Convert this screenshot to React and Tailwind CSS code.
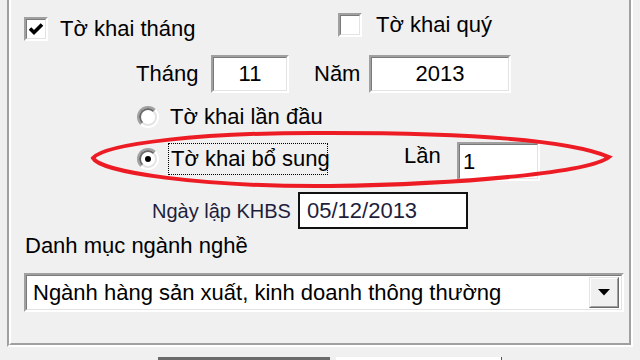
import React from 'react';

// sunken 3D field, classic Windows look
function Sunken({ className = '', children }) {
  return (
    <div className={`border-2 border-t-[#a0a0a0] border-l-[#a0a0a0] border-r-white border-b-white ${className}`}>
      <div className="w-full h-full border border-t-[#7a7a7a] border-l-[#7a7a7a] border-r-[#e3e3e3] border-b-[#e3e3e3] bg-white flex items-center">
        {children}
      </div>
    </div>
  );
}

function Checkbox({ checked }) {
  return (
    <Sunken className="w-[24px] h-[24px]">
      {checked && (
        <svg width="18" height="18" viewBox="0 0 18 18" className="mx-auto">
          <path d="M3 8.5 L7 12.5 L15 4.5" fill="none" stroke="#000" strokeWidth="3.6" />
        </svg>
      )}
    </Sunken>
  );
}

function Radio({ checked }) {
  return (
    <div className="w-[22px] h-[22px] rounded-full border-2 border-t-[#a0a0a0] border-l-[#a0a0a0] border-r-white border-b-white">
      <div className="w-full h-full rounded-full border-2 border-t-[#696969] border-l-[#696969] border-r-[#e3e3e3] border-b-[#e3e3e3] bg-white flex items-center justify-center">
        {checked && <div className="w-[6px] h-[6px] rounded-full bg-black" />}
      </div>
    </div>
  );
}

export default function App() {
  return (
    <div className="relative w-[640px] h-[360px] overflow-hidden whitespace-nowrap bg-[#f0f0f0] text-black text-[22px] leading-none font-['Liberation_Sans',Arial,sans-serif]">
      {/* group box (top edge is off screen) */}
      <div className="ml-[7px] w-[626px] border-l-2 border-r-2 border-b-2 border-l-[#a0a0a0] border-r-white border-b-white">
        <div className="border-l-2 border-r-2 border-b-2 border-l-white border-r-[#a0a0a0] border-b-[#a0a0a0] pb-[31px]">

          {/* row: loại tờ khai */}
          <div className="flex items-start h-[50px]">
            <div className="ml-[13px] w-[314px] mt-[17px] flex items-center">
              <Checkbox checked />
              <span className="ml-[12px]">Tờ khai tháng</span>
            </div>
            <div className="mt-[13px] flex items-center">
              <Checkbox />
              <span className="ml-[14px]">Tờ khai quý</span>
            </div>
          </div>

          {/* row: tháng / năm */}
          <div className="mt-[5px] h-[38px] flex items-center">
            <span className="ml-[125px] w-[75px]">Tháng</span>
            <Sunken className="w-[78px] h-[38px]">
              <span className="w-full text-center">11</span>
            </Sunken>
            <span className="ml-[25px] w-[55px]">Năm</span>
            <Sunken className="w-[142px] h-[38px]">
              <span className="w-full text-center">2013</span>
            </Sunken>
          </div>

          {/* row: lần đầu */}
          <div className="mt-[5px] h-[38px] flex items-center">
            <div className="ml-[126px]">
              <Radio />
            </div>
            <span className="ml-[11px]">Tờ khai lần đầu</span>
          </div>

          {/* row: bổ sung */}
          <div className="mt-[4px] h-[42px] flex items-start">
            <div className="ml-[126px] mt-[3px] h-[32px] flex items-center">
              <Radio checked />
              <div className="ml-[9px] w-[160px] h-[32px] border border-dotted border-black flex items-center pl-[2px]">
                Tờ khai bổ sung
              </div>
            </div>
            <span className="ml-[76px] w-[53px] mt-[5px]">Lần</span>
            <Sunken className="mt-[2px] w-[83px] h-[39px]">
              <span className="pl-[3px]">1</span>
            </Sunken>
          </div>

          {/* row: ngày lập */}
          <div className="mt-[10px] h-[37px] flex items-center">
            <span className="ml-[141px] w-[146px] text-[20px] text-[#1e1e3c]">Ngày lập KHBS</span>
            <div className="w-[170px] h-[37px] border-2 border-[#111] bg-white flex items-center pl-[7px] text-[#1e1e3c]">
              05/12/2013
            </div>
          </div>

          {/* row: danh mục */}
          <div className="mt-[3px] h-[28px] flex items-center">
            <span className="ml-[14px]">Danh mục ngành nghề</span>
          </div>

          {/* combo */}
          <div className="mt-[13px] ml-[13px] w-[600px] h-[39px] border-2 border-t-[#a0a0a0] border-l-[#a0a0a0] border-r-white border-b-white">
            <div className="w-full h-full border border-t-[#7a7a7a] border-l-[#7a7a7a] border-r-[#e3e3e3] border-b-[#e3e3e3] bg-white flex items-center justify-between pr-[2px]">
              <span className="pl-[6px]">Ngành hàng sản xuất, kinh doanh thông thường</span>
              <div className="w-[30px] h-[31px] border border-t-[#e3e3e3] border-l-[#e3e3e3] border-r-[#696969] border-b-[#696969]">
                <div className="w-full h-full border border-t-white border-l-white border-r-[#a0a0a0] border-b-[#a0a0a0] bg-[#f0f0f0] flex items-center justify-center">
                  <svg width="12" height="7" viewBox="0 0 12 7">
                    <polygon points="0,0 12,0 6,6.5" fill="#000" />
                  </svg>
                </div>
              </div>
            </div>
          </div>
        </div>
      </div>

      {/* buttons just peeking at the bottom */}
      <div className="mt-[10px] flex h-[3px]">
        <div className="ml-[158px] w-[172px] bg-[#6b6b6b]" />
        <div className="ml-[6px] w-[166px] bg-white border-r border-[#555]" />
      </div>

      {/* red hand-drawn ellipse */}
      <svg className="absolute left-0 top-0 pointer-events-none" width="640" height="360" viewBox="0 0 640 360">
        <path
          d="M93,158 C105,144 200,132 330,133 C450,133 565,138 609,157 C590,172 470,184 330,186 C200,187 100,172 93,158 Z"
          fill="none"
          stroke="#ed1c24"
          strokeWidth="4"
        />
      </svg>
    </div>
  );
}
